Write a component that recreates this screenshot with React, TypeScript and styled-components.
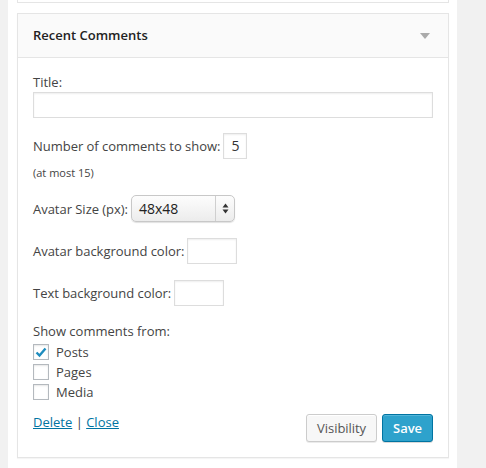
import styled, { createGlobalStyle } from 'styled-components';

const GlobalStyle = createGlobalStyle`
  body {
    margin: 0;
    background: #f1f1f1;
    font-family: 'Open Sans', 'Liberation Sans', sans-serif;
    font-size: 13px;
    color: #444;
  }
`;

const Sidebar = styled.div`
  margin-left: 8px;
  width: 449px;
  min-height: 468px;
  box-sizing: border-box;
  padding: 0 8px 0 9px;
  background: #fff;
`;

const WidgetStub = styled.div`
  height: 2px;
  border: 1px solid #e5e5e5;
  border-top: 0;
  background: #fff;
`;

const Widget = styled.div`
  margin-top: 10px;
  border: 1px solid #e5e5e5;
  background: #fff;
  box-shadow: 0 1px 1px rgba(0, 0, 0, 0.04);
`;

const WidgetHeader = styled.div`
  height: 43px;
  display: flex;
  align-items: center;
  justify-content: space-between;
  padding: 0 18px 0 15px;
  background: #fafafa;
  border-bottom: 1px solid #e5e5e5;

  h3 {
    margin: 0 0 1px;
    font-size: 13px;
    font-weight: 600;
    color: #222;
  }
`;

const Arrow = styled.span`
  width: 0;
  height: 0;
  border-left: 5px solid transparent;
  border-right: 5px solid transparent;
  border-top: 6px solid #aaa;
`;

const WidgetBody = styled.div`
  display: flex;
  flex-direction: column;
  padding: 0 15px 15px;
`;

const Block = styled.div<{ $top: number }>`
  margin-top: ${(p) => p.$top}px;
  display: flex;
  flex-direction: column;
  line-height: 18px;
`;

const Row = styled.div<{ $top: number }>`
  margin-top: ${(p) => p.$top}px;
  display: flex;
  align-items: center;
  gap: 3px;
  letter-spacing: -0.03px;
`;

const TextInput = styled.div<{ $width?: number }>`
  box-sizing: border-box;
  width: ${(p) => (p.$width ? `${p.$width}px` : '100%')};
  height: 26px;
  border: 1px solid #ddd;
  box-shadow: inset 0 1px 2px rgba(0, 0, 0, 0.07);
  background: #fff;
  font-size: 14px;
  line-height: 24px;
  text-align: center;
  color: #333;
`;

const Note = styled.small`
  margin-top: 6px;
  font-size: 11px;
  line-height: 16px;
  color: #444;
`;

const Select = styled.div`
  box-sizing: border-box;
  width: 104px;
  height: 27px;
  display: flex;
  align-items: stretch;
  border: 1px solid #c8c8c8;
  border-radius: 5px;
  background: linear-gradient(#fdfdfd, #ececec);
  box-shadow: 0 1px 1px rgba(0, 0, 0, 0.12);
  color: #222;
  font-size: 14px;

  span {
    flex: 1;
    padding-left: 7px;
    line-height: 25px;
  }
`;

const SelectArrows = styled.div`
  width: 18px;
  border-left: 1px solid #cfcfcf;
  display: flex;
  align-items: center;
  justify-content: center;
`;

const Checks = styled.div`
  margin-top: 4px;
  display: flex;
  flex-direction: column;
  gap: 4px;
`;

const CheckRow = styled.label`
  display: flex;
  align-items: center;
  gap: 7px;
  height: 16px;
  color: #444;
`;

const Box = styled.span`
  box-sizing: border-box;
  width: 16px;
  height: 16px;
  border: 1px solid #b4b9be;
  box-shadow: inset 0 1px 2px rgba(0, 0, 0, 0.1);
  background: #fff;
  display: flex;
  align-items: center;
  justify-content: center;
`;

const Footer = styled.div`
  margin-top: 14px;
  display: flex;
  justify-content: space-between;
  align-items: flex-start;
`;

const Links = styled.div`
  margin-top: -1px;
  line-height: 18px;
  color: #444;

  a {
    color: #0074a2;
    text-decoration: underline;
  }
`;

const Buttons = styled.div`
  display: flex;
  gap: 5px;
`;

const Button = styled.button<{ $primary?: boolean }>`
  box-sizing: border-box;
  height: 28px;
  padding: 0 10px;
  border-radius: 3px;
  font-family: inherit;
  font-size: 13px;
  line-height: 26px;
  letter-spacing: -0.05px;
  border: 1px solid ${(p) => (p.$primary ? '#0074a2' : '#ccc')};
  background: ${(p) => (p.$primary ? '#2ea2cc' : '#f7f7f7')};
  color: ${(p) => (p.$primary ? '#fff' : '#555')};
  font-weight: ${(p) => (p.$primary ? 600 : 400)};
  box-shadow: ${(p) =>
    p.$primary
      ? 'inset 0 1px 0 rgba(120, 200, 230, 0.5), 0 1px 0 rgba(0, 0, 0, 0.15)'
      : 'inset 0 1px 0 #fff, 0 1px 0 rgba(0, 0, 0, 0.08)'};
`;

const sources = [
  { label: 'Posts', checked: true },
  { label: 'Pages', checked: false },
  { label: 'Media', checked: false },
];

const App = () => {
  return (
    <>
      <GlobalStyle />
      <Sidebar>
        <WidgetStub />
        <Widget>
          <WidgetHeader>
            <h3>Recent Comments</h3>
            <Arrow />
          </WidgetHeader>
          <WidgetBody>
            <Block $top={15}>
              <label>Title:</label>
              <TextInput style={{ marginTop: 1 }} />
            </Block>
            <Row $top={15}>
              <label>Number of comments to show:</label>
              <TextInput $width={24}>5</TextInput>
            </Row>
            <Note>(at most 15)</Note>
            <Row $top={14}>
              <label>Avatar Size (px):</label>
              <Select>
                <span>48x48</span>
                <SelectArrows>
                  <svg width="7" height="11" viewBox="0 0 7 11">
                    <path d="M3.5 0.5 L6.5 4.5 L0.5 4.5 Z" fill="#333" />
                    <path d="M3.5 10.5 L6.5 6.5 L0.5 6.5 Z" fill="#333" />
                  </svg>
                </SelectArrows>
              </Select>
            </Row>
            <Row $top={16}>
              <label>Avatar background color:</label>
              <TextInput $width={50} />
            </Row>
            <Row $top={16}>
              <label>Text background color:</label>
              <TextInput $width={50} />
            </Row>
            <Block $top={16}>
              <label>Show comments from:</label>
            </Block>
            <Checks>
              {sources.map((s) => (
                <CheckRow key={s.label}>
                  <Box>
                    {s.checked && (
                      <svg width="12" height="12" viewBox="0 0 12 12">
                        <path
                          d="M1.5 6.5 L4.5 9.5 L10.5 2.5"
                          fill="none"
                          stroke="#1e8cbe"
                          strokeWidth="2.4"
                        />
                      </svg>
                    )}
                  </Box>
                  {s.label}
                </CheckRow>
              ))}
            </Checks>
            <Footer>
              <Links>
                <a href="#delete">Delete</a> | <a href="#close">Close</a>
              </Links>
              <Buttons>
                <Button>Visibility</Button>
                <Button $primary>Save</Button>
              </Buttons>
            </Footer>
          </WidgetBody>
        </Widget>
      </Sidebar>
    </>
  );
};

export default App;
